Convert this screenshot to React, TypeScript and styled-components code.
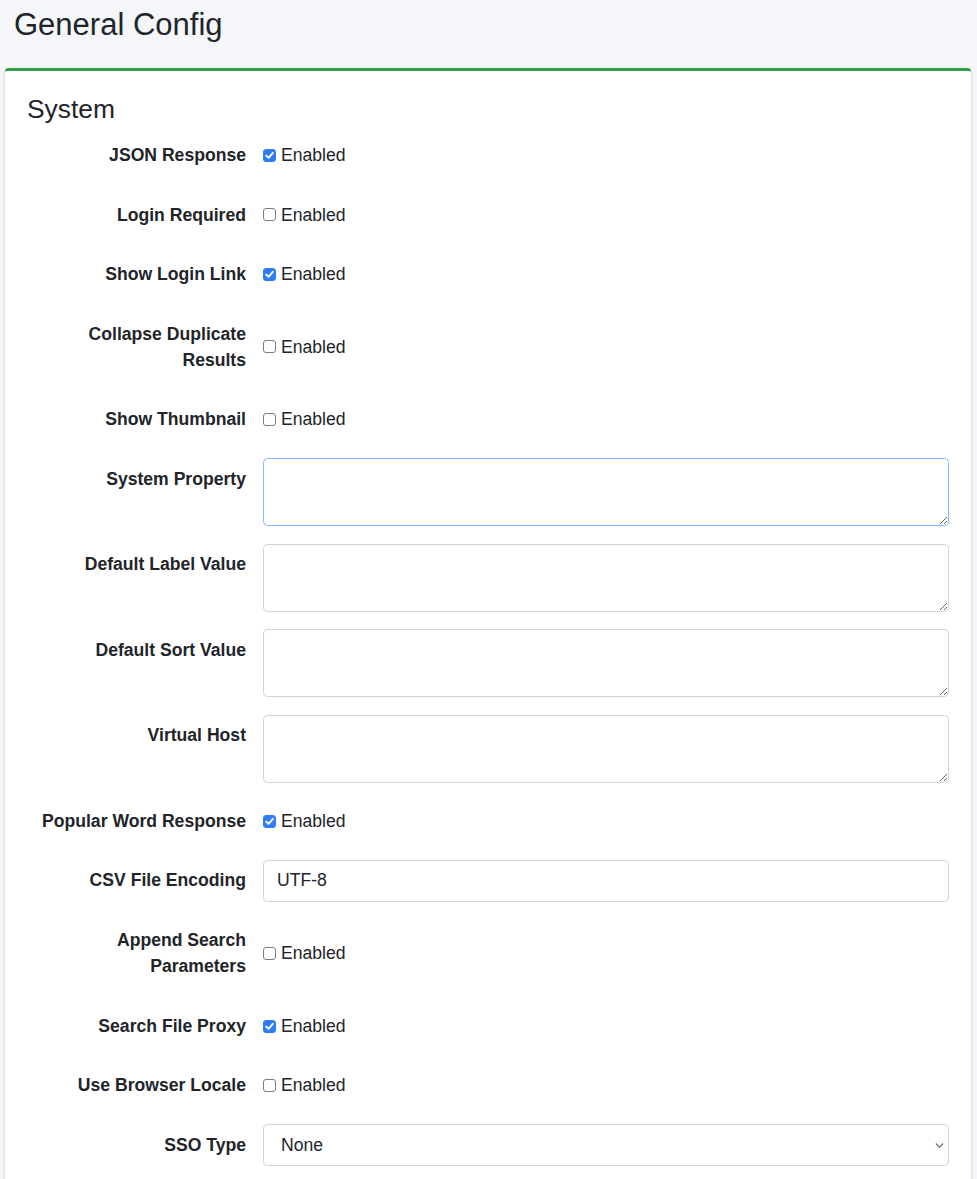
import React from "react";
import styled, { createGlobalStyle } from "styled-components";

const GlobalStyle = createGlobalStyle`
  html, body {
    margin: 0;
    padding: 0;
    background: #f4f6f9;
    color: #212529;
    font-family: "Liberation Sans", Arial, Helvetica, sans-serif;
  }
  * { box-sizing: border-box; }
`;

const Page = styled.div`
  min-height: 1179px;
  background: #f4f6f9;
  padding: 0 6px 0 5px;
`;

const Header = styled.header`
  padding: 6px 9px 0;
`;

const PageTitle = styled.h1`
  margin: 0;
  font-size: 31px;
  line-height: 37px;
  font-weight: 400;
  color: #212529;
`;

const Card = styled.section`
  margin-top: 25px;
  background: #fff;
  border-top: 3px solid #2ea043;
  border-radius: 4px;
  box-shadow: 0 0 1px rgba(0, 0, 0, 0.125), 0 1px 3px rgba(0, 0, 0, 0.2);
`;

const CardBody = styled.div`
  padding: 23px 22px 22px;
`;

const SectionTitle = styled.h3`
  margin: 0 0 9px;
  font-size: 26.4px;
  line-height: 31.7px;
  font-weight: 400;
`;

const Form = styled.form`
  display: flex;
  flex-direction: column;
  gap: 17.6px;
`;

const Row = styled.div`
  display: grid;
  grid-template-columns: 219px 1fr;
  column-gap: 17px;
  align-items: start;
`;

const Label = styled.label`
  text-align: right;
  font-weight: 700;
  font-size: 17.6px;
  line-height: 26.4px;
  padding: 7.7px 0;
`;

const CheckCell = styled.label`
  align-self: stretch;
  display: flex;
  align-items: center;
  gap: 5px;
  font-size: 17.6px;
  line-height: 26.4px;
  color: #212529;
`;

const BoxWrap = styled.span`
  position: relative;
  display: inline-flex;
  width: 13px;
  height: 13px;
`;

const Box = styled.input`
  appearance: none;
  margin: 0;
  width: 13px;
  height: 13px;
  border-radius: 3px;
  border: 1px solid #7d7d7d;
  background: #fff;
  &:checked {
    background: #2f7df6;
    border-color: #2f7df6;
  }
`;

const Tick = styled.svg`
  position: absolute;
  left: 1px;
  top: 1px;
  width: 11px;
  height: 11px;
  pointer-events: none;
`;

const TextArea = styled.textarea<{ $focused?: boolean }>`
  display: block;
  width: 100%;
  height: 68px;
  margin: 0;
  padding: 7.7px 13px;
  font-family: inherit;
  font-size: 17.6px;
  line-height: 26.4px;
  color: #212529;
  background: #fff;
  border: 1px solid ${(p) => (p.$focused ? "#80bdff" : "#ced4da")};
  border-radius: 4.4px;
  outline: none;
  resize: vertical;
`;

const TextInput = styled.input`
  display: block;
  width: 100%;
  height: 42px;
  margin: 0;
  padding: 0 13px;
  font-family: inherit;
  font-size: 17.6px;
  color: #212529;
  background: #fff;
  border: 1px solid #ced4da;
  border-radius: 4.4px;
  outline: none;
`;

const SelectWrap = styled.div`
  position: relative;
`;

const Select = styled.select`
  display: block;
  width: 100%;
  height: 42px;
  margin: 0;
  padding: 0 32px 0 17px;
  appearance: none;
  font-family: inherit;
  font-size: 17.6px;
  color: #212529;
  background: #fff;
  border: 1px solid #ced4da;
  border-radius: 4.4px;
  outline: none;
`;

const Chevron = styled.svg`
  position: absolute;
  right: 5px;
  top: 18px;
  width: 9px;
  height: 7px;
  pointer-events: none;
`;

type Field =
  | { kind: "check"; label: string; checked: boolean }
  | { kind: "area"; label: string; focused?: boolean }
  | { kind: "text"; label: string; value: string }
  | { kind: "select"; label: string; value: string };

const fields: Field[] = [
  { kind: "check", label: "JSON Response", checked: true },
  { kind: "check", label: "Login Required", checked: false },
  { kind: "check", label: "Show Login Link", checked: true },
  { kind: "check", label: "Collapse Duplicate Results", checked: false },
  { kind: "check", label: "Show Thumbnail", checked: false },
  { kind: "area", label: "System Property", focused: true },
  { kind: "area", label: "Default Label Value" },
  { kind: "area", label: "Default Sort Value" },
  { kind: "area", label: "Virtual Host" },
  { kind: "check", label: "Popular Word Response", checked: true },
  { kind: "text", label: "CSV File Encoding", value: "UTF-8" },
  { kind: "check", label: "Append Search Parameters", checked: false },
  { kind: "check", label: "Search File Proxy", checked: true },
  { kind: "check", label: "Use Browser Locale", checked: false },
  { kind: "select", label: "SSO Type", value: "None" },
];

function Checkbox({ checked }: { checked: boolean }) {
  return (
    <BoxWrap>
      <Box type="checkbox" defaultChecked={checked} />
      {checked && (
        <Tick viewBox="0 0 11 11">
          <path
            d="M2.2 5.6 L4.5 7.9 L8.9 2.8"
            fill="none"
            stroke="#fff"
            strokeWidth="1.9"
            strokeLinecap="round"
            strokeLinejoin="round"
          />
        </Tick>
      )}
    </BoxWrap>
  );
}

function Control({ field }: { field: Field }) {
  switch (field.kind) {
    case "check":
      return (
        <CheckCell>
          <Checkbox checked={field.checked} />
          Enabled
        </CheckCell>
      );
    case "area":
      return <TextArea $focused={field.focused} />;
    case "text":
      return <TextInput type="text" defaultValue={field.value} />;
    case "select":
      return (
        <SelectWrap>
          <Select defaultValue={field.value}>
            <option>None</option>
            <option>OpenID Connect</option>
            <option>SAML</option>
            <option>SPNEGO</option>
          </Select>
          <Chevron viewBox="0 0 9 7">
            <path d="M0.8 1.5 L4.5 5.2 L8.2 1.5" fill="none" stroke="#6c6c6c" strokeWidth="1.1" />
          </Chevron>
        </SelectWrap>
      );
  }
}

export default function App() {
  return (
    <>
      <GlobalStyle />
      <Page>
        <Header>
          <PageTitle>General Config</PageTitle>
        </Header>
        <Card>
          <CardBody>
            <SectionTitle>System</SectionTitle>
            <Form onSubmit={(e) => e.preventDefault()}>
              {fields.map((f) => (
                <Row key={f.label}>
                  <Label>{f.label}</Label>
                  <Control field={f} />
                </Row>
              ))}
            </Form>
          </CardBody>
        </Card>
      </Page>
    </>
  );
}
